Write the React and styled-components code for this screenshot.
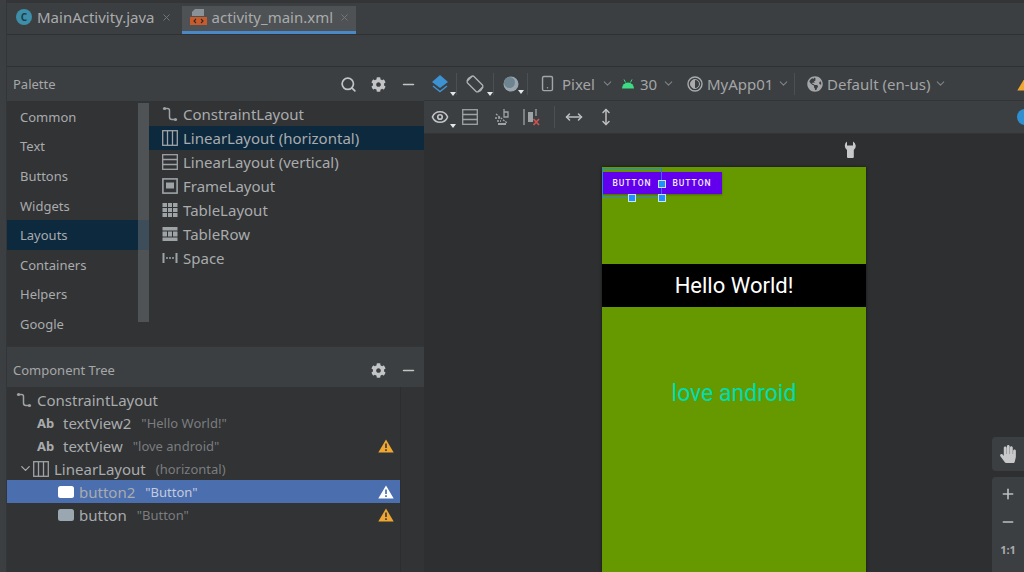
import React from "react";
import styled, { createGlobalStyle } from "styled-components";
import { FaCog, FaGlobeAmericas, FaHandPaper } from "react-icons/fa";
import { Search, Minus, Plus, ChevronDown, X, MoveHorizontal, MoveVertical, Smartphone, Eye } from "lucide-react";

const Global = createGlobalStyle`
  html, body { margin: 0; padding: 0; background: #3c3f41; }
  * { box-sizing: border-box; }
`;

const Page = styled.div`
  width: 1024px;
  height: 572px;
  overflow: hidden;
  display: flex;
  background: #3c3f41;
  color: #b4b6b8;
  font-family: "Noto Sans", "Open Sans", sans-serif;
  font-size: 14px;
`;

const LeftStrip = styled.div`
  width: 7px;
  flex: none;
  background: #3c3f41;
  border-right: 1px solid #333537;
`;

const Main = styled.div`
  flex: 1;
  min-width: 0;
  display: flex;
  flex-direction: column;
`;

const TabBar = styled.div`
  height: 35px;
  flex: none;
  display: flex;
  padding-top: 3px;
  border-top: 3px solid #333537;
  margin-top: 0;
  border-bottom: 1px solid #2f3133;
`;

const Tab = styled.div`
  height: 100%;
  display: flex;
  align-items: center;
  padding: ${(p) => (p.$active ? "0 6px 3px 8px" : "0 10px 3px 9px")};
  background: ${(p) => (p.$active ? "#4e5254" : "transparent")};
  border-bottom: 3px solid ${(p) => (p.$active ? "#4a88c7" : "transparent")};
  font-size: 15px;
  color: #a9abad;
`;

const TabName = styled.span`
  margin: 0 6px 0 5px;
  white-space: nowrap;
`;

const ClassBadge = styled.span`
  width: 16px;
  height: 16px;
  border-radius: 50%;
  background: #3d8ea8;
  color: #1f3d49;
  font-size: 10px;
  font-weight: 700;
  display: flex;
  align-items: center;
  justify-content: center;
`;

const EmptyBar = styled.div`
  height: 32px;
  flex: none;
  background: #3c3f41;
  border-bottom: 1px solid #2f3133;
`;

const Split = styled.div`
  flex: 1;
  min-height: 0;
  display: flex;
`;

const Side = styled.div`
  width: 417px;
  flex: none;
  display: flex;
  flex-direction: column;
`;

const PanelHead = styled.div`
  height: 34px;
  flex: none;
  display: flex;
  align-items: center;
  padding: 0 7px 0 6px;
  font-size: 13px;
  color: #a5a7a9;
  background: #3c3f41;
`;

const HeadTitle = styled.span`
  flex: 1;
`;

const HeadTools = styled.div`
  display: flex;
  align-items: center;
  gap: 14px;
  color: #c2c4c6;
`;

const Palette = styled.div`
  height: 245px;
  flex: none;
  display: flex;
  background: #313335;
`;

const Categories = styled.div`
  width: 142px;
  flex: none;
  position: relative;
  padding-top: 1px;
`;

const Category = styled.div`
  height: 29.6px;
  display: flex;
  align-items: center;
  padding-left: 13px;
  font-size: 13px;
  color: #a9abad;
  background: ${(p) => (p.$active ? "#0d293e" : "transparent")};
`;

const CatScroll = styled.div`
  position: absolute;
  top: 2px;
  right: 0;
  width: 11px;
  height: 219px;
  background: rgba(110, 115, 118, 0.5);
`;

const Items = styled.div`
  flex: 1;
  padding-top: 1px;
  position: relative;
`;

const Item = styled.div`
  height: 24px;
  display: flex;
  align-items: center;
  gap: 5px;
  padding-left: 13px;
  font-size: 15px;
  color: #a9abad;
  white-space: nowrap;
  background: ${(p) => (p.$active ? "#0d293e" : "transparent")};
`;

const Gap = styled.div`
  height: 7px;
  flex: none;
  background: #3c3f41;
  border-top: 1px solid #333537;
`;

const Tree = styled.div`
  flex: 1;
  display: flex;
  background: #313335;
`;

const TreeList = styled.div`
  width: 393px;
  flex: none;
  padding-top: 1px;
`;

const TreeGutter = styled.div`
  flex: 1;
  border-left: 1px solid #2b2d2e;
`;

const Row = styled.div`
  height: 23px;
  display: flex;
  align-items: center;
  padding: 0 6px 0 ${(p) => p.$indent}px;
  background: ${(p) => (p.$selected ? "#4b6eaf" : "transparent")};
  white-space: nowrap;
`;

const RowName = styled.span`
  font-size: 15px;
  color: #a9abad;
  margin-left: ${(p) => p.$gap || 5}px;
`;

const RowHint = styled.span`
  font-size: 13px;
  color: ${(p) => (p.$selected ? "#c4cbdb" : "#7b7d7f")};
  margin-left: 10px;
`;

const Ab = styled.span`
  width: 21px;
  font-size: 13px;
  font-weight: 700;
  color: #a9abad;
`;

const WarnSlot = styled.span`
  margin-left: auto;
  display: flex;
`;

const Design = styled.div`
  flex: 1;
  min-width: 0;
  display: flex;
  flex-direction: column;
`;

const Toolbar = styled.div`
  height: ${(p) => p.$h}px;
  flex: none;
  display: flex;
  align-items: center;
  background: #3c3f41;
  border-bottom: 1px solid #323436;
  white-space: nowrap;
  overflow: hidden;
  font-size: 15px;
  color: #a3a5a7;
`;

const Tool = styled.span`
  position: relative;
  width: ${(p) => p.$w}px;
  flex: none;
  display: flex;
  align-items: center;
  justify-content: ${(p) => p.$align || "center"};
  gap: ${(p) => p.$gap || 0}px;
`;

const Caret = styled.i`
  position: absolute;
  right: ${(p) => p.$right || 0}px;
  bottom: -2px;
  border: 3px solid transparent;
  border-top: 4px solid #e4e6e8;
  border-bottom: 0;
`;

const Divider = styled.span`
  width: 1px;
  height: 22px;
  flex: none;
  background: #4c5052;
`;

const Canvas = styled.div`
  flex: 1;
  min-height: 0;
  position: relative;
  padding: 33px 0 0 178px;
  background: #2d2f30;
`;

const Wrench = styled.span`
  position: absolute;
  left: 420px;
  top: 7px;
  display: flex;
`;

const Device = styled.div`
  position: relative;
  width: 264px;
  height: 420px;
  display: flex;
  flex-direction: column;
  background: #669900;
  box-shadow: 0 0 3px rgba(0, 0, 0, 0.5);
  font-family: Roboto, sans-serif;
`;

const ButtonRow = styled.div`
  height: 97px;
  flex: none;
  display: flex;
  align-items: flex-start;
  padding-top: 5px;
`;

const DeviceButton = styled.div`
  width: 60px;
  height: 22px;
  display: flex;
  align-items: center;
  justify-content: center;
  background: #6200ee;
  color: #f3ecff;
  font-size: 8.5px;
  font-weight: 500;
  letter-spacing: 1px;
  box-shadow: 0 1px 2px rgba(0, 0, 0, 0.3);
`;

const Band = styled.div`
  height: 43px;
  flex: none;
  background: #000;
  color: #fff;
  display: flex;
  align-items: center;
  justify-content: center;
  font-size: 22px;
`;

const Love = styled.div`
  padding-top: 73px;
  text-align: center;
  font-size: 23px;
  line-height: 28px;
  color: #00dcb0;
`;

const Selection = styled.div`
  position: absolute;
  left: 0;
  top: 1px;
  width: 60px;
  height: 30px;
  border: 1px solid #1f8fc4;
  border-right-color: #2e6ff0;
  border-bottom-color: #2d88d8;
`;

const Handle = styled.span`
  position: absolute;
  left: ${(p) => p.$x}px;
  top: ${(p) => p.$y}px;
  width: 8px;
  height: 8px;
  background: #1e90ff;
  border: 1px solid #cfe3e8;
`;

const ZoomDock = styled.div`
  position: absolute;
  right: 0;
  top: 303px;
  width: 32px;
  display: flex;
  flex-direction: column;
  gap: 6px;
`;

const DockBox = styled.div`
  height: ${(p) => p.$h}px;
  display: flex;
  flex-direction: column;
  align-items: center;
  gap: 12px;
  padding-top: ${(p) => p.$pad}px;
  background: #3c3f41;
  border-radius: 4px 0 0 4px;
  color: #bdbfc1;
`;

const OneToOne = styled.span`
  font-size: 11px;
  font-weight: 700;
  color: #a9abad;
`;

const ICON = "#9ea3a6";

const Glyph = ({ children, w = 16, h = 16, view = "0 0 16 16" }) => (
  <svg width={w} height={h} viewBox={view} fill="none" stroke={ICON} strokeWidth="1.3" style={{ flex: "none" }}>
    {children}
  </svg>
);

const ConstraintIcon = () => (
  <Glyph>
    <circle cx="2.5" cy="2.5" r="1.6" fill={ICON} stroke="none" />
    <circle cx="13.5" cy="13.5" r="1.6" fill={ICON} stroke="none" />
    <path d="M3 2.5h2.5a2 2 0 0 1 2 2v6.5a2.5 2.5 0 0 0 2.5 2.5h3" strokeWidth="1.5" />
  </Glyph>
);

const ColumnsIcon = () => (
  <Glyph>
    <rect x="0.7" y="0.7" width="14.6" height="14.6" />
    <path d="M5.5 1v14M10.5 1v14" />
  </Glyph>
);

const RowsIcon = () => (
  <Glyph>
    <rect x="0.7" y="0.7" width="14.6" height="14.6" />
    <path d="M1 5.5h14M1 10.5h14" />
  </Glyph>
);

const FrameIcon = () => (
  <Glyph>
    <rect x="0.9" y="0.9" width="14.2" height="14.2" strokeWidth="1.6" />
    <rect x="4" y="4.5" width="8" height="6" fill={ICON} stroke="none" />
  </Glyph>
);

const TableIcon = () => (
  <Glyph>
    <rect x="0.5" y="1" width="15" height="14" fill={ICON} stroke="none" />
    <path d="M5.5 1v14M10.5 1v14M0 5.5h16M0 10.5h16" stroke="#313335" strokeWidth="1" />
  </Glyph>
);

const TableRowIcon = () => (
  <Glyph>
    <rect x="0.5" y="1" width="15" height="14" fill={ICON} stroke="none" />
    <path d="M0 5h16M0 11h16" stroke="#313335" strokeWidth="1" />
    <path d="M5.5 5v6M10.5 5v6" stroke="#313335" strokeWidth="1" />
  </Glyph>
);

const SpaceIcon = () => (
  <Glyph>
    <path d="M1.5 3v10M14.5 3v10" strokeWidth="2" />
    <path d="M4 8h8" strokeWidth="1.6" strokeDasharray="2 1" />
  </Glyph>
);

const ButtonIcon = ({ color }) => (
  <svg width="16" height="12" viewBox="0 0 16 12" style={{ flex: "none" }}>
    <rect width="16" height="12" rx="2.5" fill={color} />
  </svg>
);

const Warning = ({ light }) => (
  <svg width="16" height="14" viewBox="0 0 16 14">
    <path d="M8 0.5 15.7 13.5H0.3Z" fill={light ? "#ffffff" : "#f0a732"} />
    <path d="M8 4.5v4.5M8 10.2v1.8" stroke={light ? "#4b6eaf" : "#3c3f41"} strokeWidth="1.7" />
  </svg>
);

const LayersIcon = () => (
  <svg width="20" height="20" viewBox="0 0 20 20">
    <path d="M10 1 18 8 10 14 2 8Z" fill="#3d93d2" />
    <path d="M3 12 10 17.5 17 12" fill="none" stroke="#3d93d2" strokeWidth="1.5" />
  </svg>
);

const RotateIcon = () => (
  <svg width="20" height="20" viewBox="0 0 20 20" fill="none" stroke="#b0b2b4" strokeWidth="1.3">
    <rect x="5.5" y="2.5" width="9" height="15" rx="1.5" transform="rotate(-45 10 10)" />
    <path d="M2 7a9 9 0 0 1 5-5M18 13a9 9 0 0 1-5 5" />
  </svg>
);

const MoonIcon = () => (
  <svg width="16" height="16" viewBox="0 0 16 16">
    <circle cx="8" cy="8" r="7.5" fill="#9aa6ae" />
    <circle cx="6.5" cy="6.5" r="5.5" fill="#6f8491" />
  </svg>
);

const AndroidIcon = () => (
  <svg width="14" height="11" viewBox="0 0 14 11">
    <path d="M1 10.5a6 6 0 0 1 12 0Z" fill="#3ddc84" />
    <path d="M3 1.5 4.6 4.5M11 1.5 9.4 4.5" stroke="#3ddc84" strokeWidth="1" />
  </svg>
);

const ThemeIcon = () => (
  <svg width="16" height="16" viewBox="0 0 16 16">
    <circle cx="8" cy="8" r="7" fill="none" stroke="#a9abad" strokeWidth="1.4" />
    <path d="M8 3.5a4.5 4.5 0 0 0 0 9Z" fill="#a9abad" />
    <circle cx="8" cy="8" r="4.5" fill="none" stroke="#a9abad" strokeWidth="1" />
  </svg>
);

const MagnetOffIcon = () => (
  <svg width="18" height="18" viewBox="0 0 18 18" fill="none" stroke={ICON} strokeWidth="1.3">
    <path d="M11 1v8h4V4h-4" />
    <path d="M3 6 14 15M2 10h5M4 13h4" strokeDasharray="2 1" />
    <path d="M5 16h8" strokeWidth="2" />
  </svg>
);

const ErrorsIcon = () => (
  <svg width="18" height="18" viewBox="0 0 18 18" fill="none">
    <path d="M1 1v16" stroke={ICON} strokeWidth="1.3" />
    <rect x="5" y="4" width="5" height="10" fill={ICON} />
    <path d="M13 1v7" stroke={ICON} strokeWidth="1.3" />
    <path d="M10.5 11 16 17M16 11 10.5 17" stroke="#c75450" strokeWidth="1.8" />
  </svg>
);

const XmlIcon = () => (
  <svg width="17" height="18" viewBox="0 0 17 18">
    <path d="M5 1h9v7H2V4Z" fill="#8a9298" />
    <rect x="0" y="9" width="17" height="8" fill="#c85a2b" />
    <path d="M6 11 4 13l2 2M11 11l2 2-2 2" fill="none" stroke="#2b2b2b" strokeWidth="1.1" />
  </svg>
);

const WrenchIcon = () => (
  <svg width="12" height="17" viewBox="0 0 12 17">
    <path d="M3 0.5v4h6v-4a5.2 5.2 0 0 1 0.8 8.6V16a1 1 0 0 1-1 1H4a1 1 0 0 1-1-1V9A5.2 5.2 0 0 1 3 0.5Z" fill="#c6c8ca" />
  </svg>
);

const InfoDot = styled.span`
  width: 16px;
  height: 16px;
  flex: none;
  border-radius: 50%;
  background: #2f8fd0;
  margin-left: auto;
  margin-right: -9px;
`;

const categories = ["Common", "Text", "Buttons", "Widgets", "Layouts", "Containers", "Helpers", "Google"];

const paletteItems = [
  { name: "ConstraintLayout", Icon: ConstraintIcon },
  { name: "LinearLayout (horizontal)", Icon: ColumnsIcon, active: true },
  { name: "LinearLayout (vertical)", Icon: RowsIcon },
  { name: "FrameLayout", Icon: FrameIcon },
  { name: "TableLayout", Icon: TableIcon },
  { name: "TableRow", Icon: TableRowIcon },
  { name: "Space", Icon: SpaceIcon },
];

const Chevron = () => <ChevronDown size={13} strokeWidth={2} color="#7f8385" />;

export default function App() {
  return (
    <Page>
      <Global />
      <LeftStrip />
      <Main>
        <TabBar>
          <Tab>
            <ClassBadge>C</ClassBadge>
            <TabName>MainActivity.java</TabName>
            <X size={11} color="#77797b" />
          </Tab>
          <Tab $active>
            <XmlIcon />
            <TabName>activity_main.xml</TabName>
            <X size={11} color="#77797b" />
          </Tab>
        </TabBar>
        <EmptyBar />
        <Split>
          <Side>
            <PanelHead>
              <HeadTitle>Palette</HeadTitle>
              <HeadTools>
                <Search size={17} strokeWidth={2.4} />
                <FaCog size={15} />
                <Minus size={17} strokeWidth={2.2} />
              </HeadTools>
            </PanelHead>
            <Palette>
              <Categories>
                {categories.map((c) => (
                  <Category key={c} $active={c === "Layouts"}>
                    {c}
                  </Category>
                ))}
                <CatScroll />
              </Categories>
              <Items>
                {paletteItems.map(({ name, Icon, active }) => (
                  <Item key={name} $active={active}>
                    <Icon />
                    {name}
                  </Item>
                ))}
              </Items>
            </Palette>
            <Gap />
            <PanelHead>
              <HeadTitle>Component Tree</HeadTitle>
              <HeadTools>
                <FaCog size={15} />
                <Minus size={17} strokeWidth={2.2} />
              </HeadTools>
            </PanelHead>
            <Tree>
              <TreeList>
                <Row $indent={9}>
                  <ConstraintIcon />
                  <RowName>ConstraintLayout</RowName>
                </Row>
                <Row $indent={30}>
                  <Ab>Ab</Ab>
                  <RowName $gap={0}>textView2</RowName>
                  <RowHint>"Hello World!"</RowHint>
                </Row>
                <Row $indent={30}>
                  <Ab>Ab</Ab>
                  <RowName $gap={0}>textView</RowName>
                  <RowHint>"love android"</RowHint>
                  <WarnSlot>
                    <Warning />
                  </WarnSlot>
                </Row>
                <Row $indent={11}>
                  <ChevronDown size={15} strokeWidth={2} color="#a9abad" />
                  <Glyph>
                    <rect x="0.7" y="0.7" width="14.6" height="14.6" />
                    <path d="M5.5 1v14M10.5 1v14" />
                  </Glyph>
                  <RowName>LinearLayout</RowName>
                  <RowHint>(horizontal)</RowHint>
                </Row>
                <Row $indent={51} $selected>
                  <ButtonIcon color="#ffffff" />
                  <RowName>button2</RowName>
                  <RowHint $selected>"Button"</RowHint>
                  <WarnSlot>
                    <Warning light />
                  </WarnSlot>
                </Row>
                <Row $indent={51}>
                  <ButtonIcon color="#9aa7b0" />
                  <RowName>button</RowName>
                  <RowHint>"Button"</RowHint>
                  <WarnSlot>
                    <Warning />
                  </WarnSlot>
                </Row>
              </TreeList>
              <TreeGutter />
            </Tree>
          </Side>
          <Design>
            <Toolbar $h={34}>
              <Tool $w={32}>
                <LayersIcon />
                <Caret $right={0} />
              </Tool>
              <Divider />
              <Tool $w={36}>
                <RotateIcon />
                <Caret $right={0} />
              </Tool>
              <Divider />
              <Tool $w={33}>
                <MoonIcon />
                <Caret $right={3} />
              </Tool>
              <Divider />
              <Tool $w={93} $align="flex-start" $gap={6} style={undefined}>
                <Smartphone size={17} style={{ marginLeft: 11 }} />
                Pixel
                <Chevron />
              </Tool>
              <Tool $w={66} $align="flex-start" $gap={5}>
                <AndroidIcon />
                30
                <Chevron />
              </Tool>
              <Tool $w={107} $align="flex-start" $gap={4}>
                <ThemeIcon />
                MyApp01
                <Chevron />
              </Tool>
              <Divider />
              <Tool $w={160} $align="flex-start" $gap={4} $pad={0}>
                <FaGlobeAmericas size={16} style={{ marginLeft: 12 }} />
                Default (en-us)
                <Chevron />
              </Tool>
              <WarnSlot style={undefined}>
                <svg width="16" height="14" viewBox="0 0 16 14" style={{ marginRight: -9 }}>
                  <path d="M8 0.5 15.7 13.5H0.3Z" fill="#f0a732" />
                </svg>
              </WarnSlot>
            </Toolbar>
            <Toolbar $h={33}>
              <Tool $w={32}>
                <Eye size={18} strokeWidth={2.2} color="#c2c4c6" />
                <Caret $right={0} />
              </Tool>
              <Tool $w={27}>
                <RowsIcon />
              </Tool>
              <Tool $w={37}>
                <MagnetOffIcon />
              </Tool>
              <Tool $w={24}>
                <ErrorsIcon />
              </Tool>
              <Tool $w={10} />
              <Divider />
              <Tool $w={38}>
                <MoveHorizontal size={18} color="#bdbfc1" />
              </Tool>
              <Tool $w={26}>
                <MoveVertical size={18} color="#bdbfc1" />
              </Tool>
              <InfoDot />
            </Toolbar>
            <Canvas>
              <Wrench>
                <WrenchIcon />
              </Wrench>
              <Device>
                <ButtonRow>
                  <DeviceButton>BUTTON</DeviceButton>
                  <DeviceButton>BUTTON</DeviceButton>
                </ButtonRow>
                <Band>Hello World!</Band>
                <Love>love android</Love>
                <Selection />
                <Handle $x={56} $y={13} />
                <Handle $x={26} $y={27} />
                <Handle $x={56} $y={27} />
              </Device>
              <ZoomDock>
                <DockBox $h={34} $pad={8}>
                  <FaHandPaper size={18} color="#c6c8ca" />
                </DockBox>
                <DockBox $h={100} $pad={9}>
                  <Plus size={16} strokeWidth={2.4} />
                  <Minus size={16} strokeWidth={2.4} />
                  <OneToOne>1:1</OneToOne>
                </DockBox>
              </ZoomDock>
            </Canvas>
          </Design>
        </Split>
      </Main>
    </Page>
  );
}
